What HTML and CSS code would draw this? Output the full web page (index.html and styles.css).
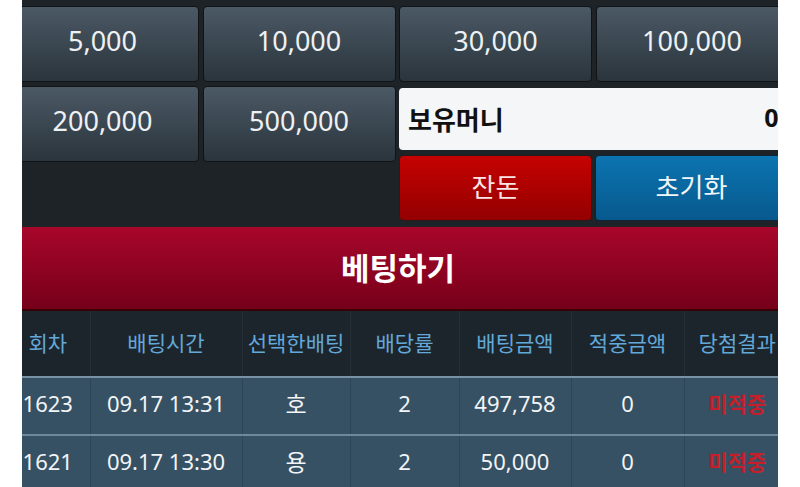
FILE: index.html
```html
<!DOCTYPE html>
<html lang="ko">
<head>
    <meta charset="UTF-8">
    <meta name="viewport" content="width=device-width, initial-scale=1.0">
    <title>배팅</title>
    <link rel="stylesheet" href="styles.css">
</head>
<body>

    <div class="screen">
        <div class="content">

            <!-- Chip buttons -->
            <div class="chip-row">
                <div class="chip">5,000</div>
                <div class="chip">10,000</div>
                <div class="chip">30,000</div>
                <div class="chip">100,000</div>
            </div>

            <div class="chip-row second">
                <div class="chip">200,000</div>
                <div class="chip">500,000</div>
                <div class="wallet">
                    <div class="money-box">
                        <span class="money-label">보유머니</span>
                        <span class="money-value">0</span>
                    </div>
                    <div class="action-row">
                        <div class="action-btn change">잔돈</div>
                        <div class="action-btn reset">초기화</div>
                    </div>
                </div>
            </div>

            <!-- Bet button -->
            <div class="bet-bar">베팅하기</div>

            <!-- History table -->
            <table class="history">
                <colgroup>
                    <col class="c1"><col class="c2"><col class="c3"><col class="c4">
                    <col class="c5"><col class="c6"><col class="c7">
                </colgroup>
                <thead>
                    <tr>
                        <th>회차</th>
                        <th>배팅시간</th>
                        <th>선택한배팅</th>
                        <th>배당률</th>
                        <th>배팅금액</th>
                        <th>적중금액</th>
                        <th>당첨결과</th>
                    </tr>
                </thead>
                <tbody>
                    <tr>
                        <td>1623</td>
                        <td>09.17 13:31</td>
                        <td class="pick">호</td>
                        <td>2</td>
                        <td>497,758</td>
                        <td>0</td>
                        <td class="result">미적중</td>
                    </tr>
                    <tr>
                        <td>1621</td>
                        <td>09.17 13:30</td>
                        <td class="pick">용</td>
                        <td>2</td>
                        <td>50,000</td>
                        <td>0</td>
                        <td class="result">미적중</td>
                    </tr>
                </tbody>
            </table>

        </div>
    </div>

</body>
</html>
```

FILE: styles.css
```css
body {
    margin: 0;
    background: #ffffff;
    font-family: "Noto Sans", "Noto Sans CJK KR", sans-serif;
}
.screen {
    width: 756px;
    height: 487px;
    margin-left: 22px;
    overflow: hidden;
    background-color: #1e2327;
}
.content {
    width: 784px;
    margin-left: -16px;
    padding-top: 6px;
}
.chip-row {
    display: grid;
    grid-template-columns: repeat(4, 193px);
    column-gap: 3.5px;
    align-items: start;
}
.chip-row.second {
    margin-top: 4px;
}
.chip {
    height: 76px;
    display: flex;
    align-items: center;
    justify-content: center;
    padding-bottom: 8px;
    box-sizing: border-box;
    border: 1px solid #101417;
    border-radius: 4px;
    background: linear-gradient(#4b5965, #2a343c);
    color: #eef1f3;
    font-size: 27px;
}
.wallet {
    grid-column: 3 / span 2;
    display: flex;
    flex-direction: column;
    margin-top: 2px;
}
.money-box {
    height: 62px;
    display: flex;
    align-items: center;
    justify-content: space-between;
    padding: 0 10px 0 9px;
    border-radius: 4px;
    background-color: #f5f6f7;
    color: #111111;
    font-weight: bold;
    font-size: 26px;
}
.money-label {
    font-family: "Noto Sans CJK KR", sans-serif;
    padding-bottom: 2px;
}
.money-value {
    font-size: 25px;
    padding-bottom: 4px;
}
.action-row {
    display: grid;
    grid-template-columns: 193px 193px;
    column-gap: 3px;
    margin-top: 5px;
    height: 66px;
}
.action-btn {
    display: flex;
    align-items: center;
    justify-content: center;
    padding-bottom: 6px;
    box-sizing: border-box;
    border: 1px solid #2a1a1c;
    border-radius: 4px;
    font-family: "Noto Sans CJK KR", sans-serif;
    font-size: 26px;
}
.action-btn.change {
    background: linear-gradient(#c60202, #930000);
    color: #fbe4e4;
}
.action-btn.reset {
    border-color: #0d2536;
    background: linear-gradient(#0c74b0, #07598d);
    color: #f2f7fb;
}
.bet-bar {
    margin-top: 6px;
    height: 84px;
    display: flex;
    align-items: center;
    justify-content: center;
    padding-bottom: 4px;
    box-sizing: border-box;
    border-bottom: 2px solid #3a0008;
    background: linear-gradient(#a8062b, #760019);
    color: #ffffff;
    font-family: "Noto Sans CJK KR", sans-serif;
    font-weight: bold;
    font-size: 31px;
}
.history {
    border-collapse: collapse;
    table-layout: fixed;
    width: 784px;
}
.c1 { width: 84px; }
.c2 { width: 152px; }
.c3 { width: 108px; }
.c4 { width: 109px; }
.c5 { width: 112px; }
.c6 { width: 113px; }
.c7 { width: 106px; }
.history th {
    height: 62px;
    padding: 0 0 3px 0;
    background-color: #1d252c;
    border-left: 1px solid #262f37;
    border-bottom: 2px solid #7891a3;
    color: #62a8d9;
    font-family: "Noto Sans CJK KR", sans-serif;
    font-weight: normal;
    font-size: 21px;
}
.history td {
    height: 50px;
    padding: 0 0 6px 0;
    background-color: #375164;
    border-left: 1px solid #2d4556;
    border-bottom: 2px solid #6e899c;
    color: #f2f4f6;
    text-align: center;
    font-size: 22px;
}
.history th:first-child,
.history td:first-child {
    border-left: none;
}
.history td.pick {
    font-family: "Noto Sans CJK KR", sans-serif;
    font-size: 23px;
}
.history td.result {
    color: #c41f2a;
    font-family: "Noto Sans CJK KR", sans-serif;
    font-weight: bold;
    font-size: 21px;
}
```
